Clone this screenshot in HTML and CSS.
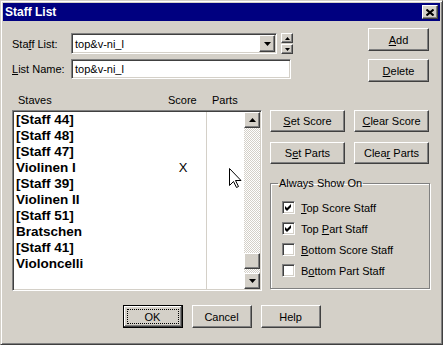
FILE: index.html
```html
<!DOCTYPE html>
<html lang="en">
<head>
  <meta charset="UTF-8">
  <title>Staff List</title>
  <link rel="stylesheet" href="styles.css">
</head>
<body>
  <div class="window">
    <div class="titlebar">
      <span class="title">Staff List</span>
      <button class="close-btn" aria-label="Close">
        <svg width="8" height="7" viewBox="0 0 8 7"><path d="M0.5 0.5 L7.5 6.5 M7.5 0.5 L0.5 6.5" stroke="#000" stroke-width="2" fill="none"/></svg>
      </button>
    </div>

    <div class="dialog">
      <!-- Staff list selector -->
      <div class="top">
        <div class="fields">
          <div class="field-row">
            <label class="field-label">Sta<u>f</u>f List:</label>
            <div class="combo">
              <span class="combo-value">top&amp;v-ni_l</span>
              <span class="combo-btn raised">
                <svg width="7" height="4" viewBox="0 0 7 4"><path d="M0 0 H7 L3.5 4 Z" fill="#000"/></svg>
              </span>
            </div>
            <div class="spin">
              <span class="spin-btn raised"><svg width="5" height="3" viewBox="0 0 5 3"><path d="M0 3 H5 L2.5 0 Z" fill="#000"/></svg></span>
              <span class="spin-btn raised"><svg width="5" height="3" viewBox="0 0 5 3"><path d="M0 0 H5 L2.5 3 Z" fill="#000"/></svg></span>
            </div>
          </div>
          <div class="field-row">
            <label class="field-label"><u>L</u>ist Name:</label>
            <div class="edit">top&amp;v-ni_l</div>
          </div>
        </div>
        <div class="side-buttons">
          <button class="btn side-btn"><span><u>A</u>dd</span></button>
          <button class="btn side-btn"><span><u>D</u>elete</span></button>
        </div>
      </div>

      <div class="middle">
        <!-- Staves list -->
        <div class="staves">
          <div class="list-header">
            <span class="col-name">Staves</span>
            <span class="col-score">Score</span>
            <span class="col-parts">Parts</span>
          </div>
          <div class="listbox">
            <div class="list-items">
              <div class="item"><span class="item-name">[Staff 44]</span><span class="item-score"></span></div>
              <div class="item"><span class="item-name">[Staff 48]</span><span class="item-score"></span></div>
              <div class="item"><span class="item-name">[Staff 47]</span><span class="item-score"></span></div>
              <div class="item"><span class="item-name">Violinen I</span><span class="item-score">X</span></div>
              <div class="item"><span class="item-name">[Staff 39]</span><span class="item-score"></span></div>
              <div class="item"><span class="item-name">Violinen II</span><span class="item-score"></span></div>
              <div class="item"><span class="item-name">[Staff 51]</span><span class="item-score"></span></div>
              <div class="item"><span class="item-name">Bratschen</span><span class="item-score"></span></div>
              <div class="item"><span class="item-name">[Staff 41]</span><span class="item-score"></span></div>
              <div class="item"><span class="item-name">Violoncelli</span><span class="item-score"></span></div>
            </div>
            <div class="scrollbar">
              <span class="scroll-btn raised"><svg width="7" height="4" viewBox="0 0 7 4"><path d="M0 4 H7 L3.5 0 Z" fill="#000"/></svg></span>
              <span class="track"></span>
              <span class="thumb raised"></span>
              <span class="track track-end"></span>
              <span class="scroll-btn raised"><svg width="7" height="4" viewBox="0 0 7 4"><path d="M0 0 H7 L3.5 4 Z" fill="#000"/></svg></span>
            </div>
            <svg class="cursor" width="13" height="21" viewBox="0 0 13 21">
              <path d="M0.5 0.5 V17.5 L4.5 13.5 L7.5 19.5 L9.5 18.5 L6.5 12.5 H12 Z" fill="#fff" stroke="#000" stroke-width="1"/>
            </svg>
          </div>
        </div>

        <!-- Actions -->
        <div class="actions">
          <div class="action-grid">
            <button class="btn action-btn"><span><u>S</u>et Score</span></button>
            <button class="btn action-btn"><span><u>C</u>lear Score</span></button>
            <button class="btn action-btn"><span>S<u>e</u>t Parts</span></button>
            <button class="btn action-btn"><span>Clea<u>r</u> Parts</span></button>
          </div>
          <fieldset class="group">
            <legend>Always Show On</legend>
            <div class="check-list">
              <div class="check-row">
                <span class="checkbox"><svg width="7" height="7" viewBox="0 0 7 7"><path d="M0 2 L2 4 L6 0 V3 L2 7 L0 5 Z" fill="#000"/></svg></span>
                <span class="check-label"><u>T</u>op Score Staff</span>
              </div>
              <div class="check-row">
                <span class="checkbox"><svg width="7" height="7" viewBox="0 0 7 7"><path d="M0 2 L2 4 L6 0 V3 L2 7 L0 5 Z" fill="#000"/></svg></span>
                <span class="check-label">Top <u>P</u>art Staff</span>
              </div>
              <div class="check-row">
                <span class="checkbox"></span>
                <span class="check-label"><u>B</u>ottom Score Staff</span>
              </div>
              <div class="check-row">
                <span class="checkbox"></span>
                <span class="check-label">B<u>o</u>ttom Part Staff</span>
              </div>
            </div>
          </fieldset>
        </div>
      </div>

      <div class="footer">
        <button class="btn footer-btn btn-default"><span class="focus">OK</span></button>
        <button class="btn footer-btn"><span>Cancel</span></button>
        <button class="btn footer-btn"><span>Help</span></button>
      </div>
    </div>
  </div>
</body>
</html>
```

FILE: styles.css
```css
/* Base */
* {
  margin: 0;
  padding: 0;
  box-sizing: border-box;
}

body {
  background: #d4d0c8;
  font-family: 'Liberation Sans', Arial, sans-serif;
  font-size: 11px;
  color: #000;
}

/* Window frame */
.window {
  width: 443px;
  height: 345px;
  display: flex;
  flex-direction: column;
  padding: 2px;
  background: #d4d0c8;
  border: 1px solid;
  border-color: #d4d0c8 #404040 #404040 #d4d0c8;
  box-shadow: inset 1px 1px #fff, inset -1px -1px #808080;
}

.titlebar {
  height: 18px;
  flex-shrink: 0;
  display: flex;
  align-items: center;
  justify-content: space-between;
  padding: 0 2px;
  background: #000080;
  color: #fff;
}

.title {
  font-weight: bold;
  font-size: 12px;
}

.close-btn {
  width: 16px;
  height: 14px;
  display: flex;
  align-items: center;
  justify-content: center;
  background: #d4d0c8;
  border: 1px solid;
  border-color: #fff #404040 #404040 #fff;
  box-shadow: inset -1px -1px #808080;
}

/* Shared 3D styles */
.raised,
.btn {
  background: #d4d0c8;
  border: 1px solid;
  border-color: #fff #404040 #404040 #fff;
  box-shadow: inset -1px -1px #808080, inset 1px 1px #d4d0c8;
}

.btn {
  font-family: inherit;
  font-size: 11px;
  color: #000;
  display: flex;
  align-items: center;
  justify-content: center;
}

.dialog {
  flex: 1;
  display: flex;
  flex-direction: column;
}

/* Top: list selector */
.top {
  display: flex;
  align-items: flex-start;
  padding: 7px 11px 0 9px;
}

.fields {
  display: flex;
  flex-direction: column;
  gap: 5px;
  padding-top: 5px;
}

.field-row {
  display: flex;
  align-items: center;
}

.field-label {
  width: 59px;
}

.combo,
.edit {
  background: #fff;
  border: 1px solid;
  border-color: #808080 #fff #fff #808080;
  box-shadow: inset 1px 1px #404040, inset -1px -1px #d4d0c8;
}

.combo {
  width: 206px;
  height: 21px;
  display: flex;
  align-items: center;
  padding: 1px 1px 1px 2px;
}

.combo-value {
  flex: 1;
  padding-left: 1px;
}

.combo-btn {
  width: 16px;
  height: 17px;
  display: flex;
  align-items: center;
  justify-content: center;
}

.spin {
  margin-left: 4px;
  width: 12px;
  height: 21px;
  display: flex;
  flex-direction: column;
  gap: 1px;
}

.spin-btn {
  flex: 1;
  display: flex;
  align-items: center;
  justify-content: center;
}

.edit {
  width: 220px;
  height: 20px;
  padding: 2px 0 0 3px;
  line-height: 14px;
}

.side-buttons {
  margin-left: auto;
  display: flex;
  flex-direction: column;
  gap: 8px;
}

.side-btn {
  width: 61px;
  height: 23px;
}

/* Middle: staves + actions */
.middle {
  display: flex;
  gap: 8px;
  margin-top: 11px;
  padding-left: 9px;
}

.staves {
  width: 250px;
}

.list-header {
  height: 17px;
  display: flex;
  padding-top: 1px;
  line-height: 13px;
}

.col-name {
  width: 156px;
  padding-left: 6px;
}

.col-score {
  width: 44px;
}

.listbox {
  position: relative;
  height: 181px;
  display: flex;
  padding: 1px;
  background: #fff;
  border: 1px solid;
  border-color: #808080 #fff #fff #808080;
  box-shadow: inset 1px 1px #404040, inset -1px -1px #d4d0c8;
}

.list-items {
  flex: 1;
  padding-left: 2px;
  background: linear-gradient(#d4d0c8, #d4d0c8) no-repeat 192px 0 / 1px 100%;
}

.item {
  display: flex;
  height: 16px;
  line-height: 16px;
  font-size: 13.5px;
  font-weight: bold;
}

.item-name {
  width: 144px;
}

.item-score {
  width: 46px;
  text-align: center;
  font-weight: normal;
  font-size: 13px;
}

.scrollbar {
  width: 16px;
  display: flex;
  flex-direction: column;
}

.scroll-btn {
  height: 16px;
  display: flex;
  align-items: center;
  justify-content: center;
}

.track {
  flex: 1;
  background: repeating-conic-gradient(#fff 0 25%, #d4d0c8 0 50%) 0 0 / 2px 2px;
}

.track-end {
  flex: 0 0 4px;
}

.thumb {
  height: 16px;
}

.cursor {
  position: absolute;
  left: 216px;
  top: 57px;
}

.actions {
  width: 160px;
  display: flex;
  flex-direction: column;
  padding-top: 17px;
}

.action-grid {
  display: grid;
  grid-template-columns: 75px 75px;
  column-gap: 9px;
  row-gap: 10px;
}

.action-btn {
  height: 22px;
}

/* Group box */
.group {
  margin-top: 13px;
  height: 112px;
  border: 1px solid #808080;
  box-shadow: inset 1px 1px #fff, 1px 1px #fff;
}

.group legend {
  margin-left: 7px;
  padding: 0 1px;
  line-height: 13px;
}

.check-list {
  display: flex;
  flex-direction: column;
  gap: 8px;
  padding: 11px 0 0 11px;
}

.check-row {
  display: flex;
  align-items: center;
  height: 13px;
}

.checkbox {
  width: 13px;
  height: 13px;
  display: flex;
  align-items: center;
  justify-content: center;
  background: #fff;
  border: 1px solid;
  border-color: #808080 #fff #fff #808080;
  box-shadow: inset 1px 1px #404040, inset -1px -1px #d4d0c8;
}

.check-label {
  margin-left: 6px;
}

/* Footer buttons */
.footer {
  display: flex;
  justify-content: center;
  gap: 9px;
  margin-top: 14px;
}

.footer-btn {
  width: 60px;
  height: 23px;
}

.btn-default {
  border: 1px solid #000;
  padding: 3px;
  box-shadow: inset -1px -1px #404040, inset 1px 1px #fff, inset -2px -2px #808080;
}

.focus {
  width: 100%;
  height: 100%;
  display: flex;
  align-items: center;
  justify-content: center;
  border: 1px dotted #000;
}
```
